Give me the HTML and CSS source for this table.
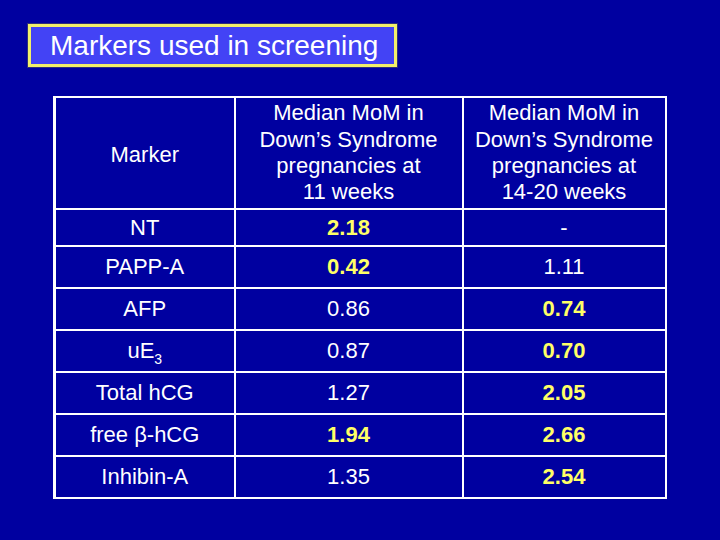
FILE: index.html
```html
<!DOCTYPE html>
<html>
<head>
<meta charset="utf-8">
<link rel="stylesheet" href="styles.css">
</head>
<body>
<div class="slide">
  <div class="title">Markers used in screening</div>
  <table class="markers">
    <colgroup>
      <col class="c1"><col class="c2"><col class="c3">
    </colgroup>
    <tr class="head">
      <td class="mk">Marker</td>
      <td>Median MoM in<br>Down’s Syndrome<br>pregnancies at<br>11 weeks</td>
      <td>Median MoM in<br>Down’s Syndrome<br>pregnancies at<br>14-20 weeks</td>
    </tr>
    <tr class="r nt"><td>NT</td><td class="hl">2.18</td><td>-</td></tr>
    <tr class="r"><td>PAPP-A</td><td class="hl">0.42</td><td>1.11</td></tr>
    <tr class="r"><td>AFP</td><td>0.86</td><td class="hl">0.74</td></tr>
    <tr class="r"><td>uE<sub>3</sub></td><td>0.87</td><td class="hl">0.70</td></tr>
    <tr class="r"><td>Total hCG</td><td>1.27</td><td class="hl">2.05</td></tr>
    <tr class="r"><td>free β-hCG</td><td class="hl">1.94</td><td class="hl">2.66</td></tr>
    <tr class="r"><td>Inhibin-A</td><td>1.35</td><td class="hl">2.54</td></tr>
  </table>
</div>
</body>
</html>
```
FILE: styles.css
```css
html, body {
  margin: 0;
  padding: 0;
  background: #0000a0;
}
.slide {
  width: 720px;
  height: 540px;
  background: #0000a0;
  font-family: "Liberation Sans", Arial, sans-serif;
  color: #ffffff;
  padding-top: 24px;
  box-sizing: border-box;
}
.title {
  margin-left: 28px;
  width: 369px;
  height: 43px;
  box-sizing: border-box;
  background: #4343f5;
  border: 3px solid #f2f06a;
  outline: 1px solid #30307a;
  font-size: 28px;
  line-height: 38px;
  padding-left: 19px;
}
.markers {
  margin-top: 29px;
  margin-left: 53px;
  border-collapse: collapse;
  table-layout: fixed;
  width: 611px;
  font-size: 22px;
}
.c1 { width: 180px; }
.c2 { width: 228px; }
.c3 { width: 203px; }
.markers td {
  border: 2px solid #ffffff;
  text-align: center;
  vertical-align: middle;
  padding: 0;
}
.markers tr td:first-child { border-left-width: 3px; }
.head td {
  height: 106px;
  line-height: 26.3px;
}
.head td.mk { padding-top: 4px; }
.r td { height: 40px; line-height: 24px; }
.r.nt td { height: 35px; }
.hl {
  color: #ffff66;
  font-weight: bold;
}
sub {
  font-size: 14px;
  vertical-align: -6px;
  line-height: 0;
}
```
